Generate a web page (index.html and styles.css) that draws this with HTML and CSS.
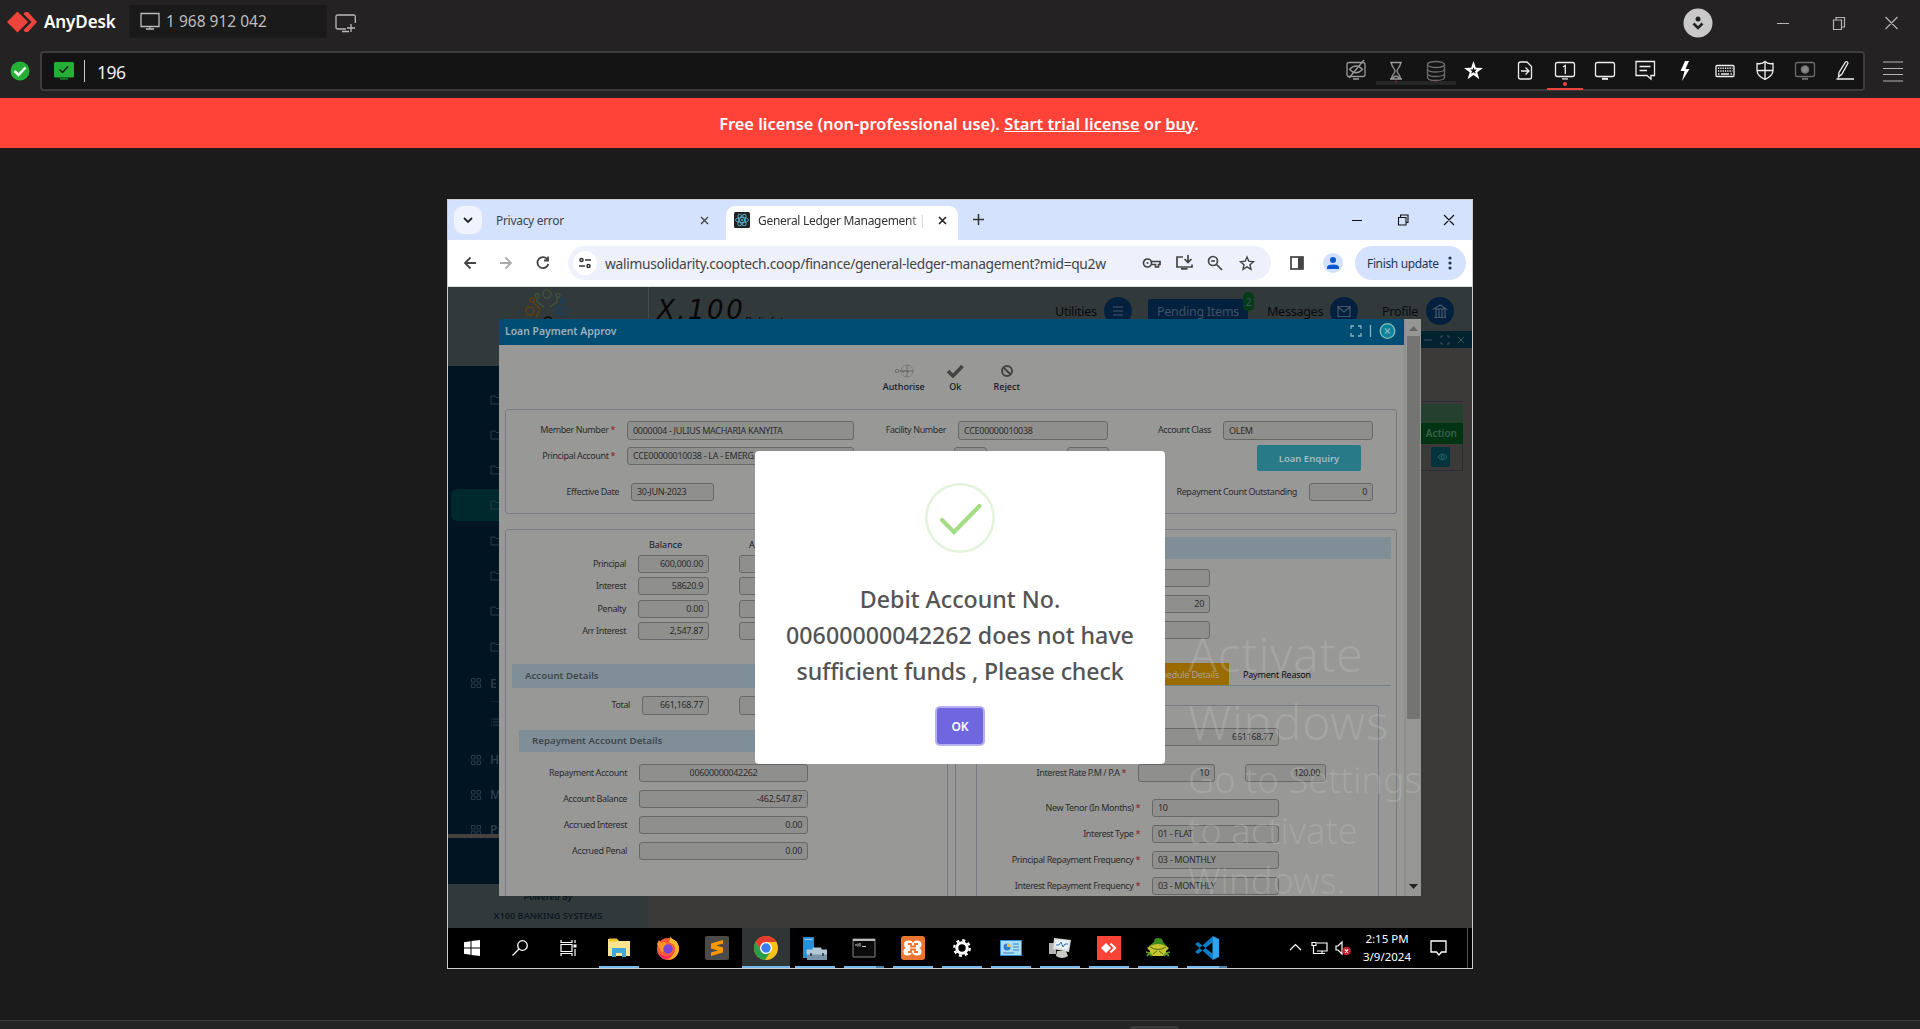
FILE: index.html
```html
<!DOCTYPE html>
<html lang="en">
<head>
<meta charset="utf-8">
<title>AnyDesk</title>
<link rel="stylesheet" href="styles.css">
</head>
<body>
<header class="titlebar">
  <svg class="logo" width="30" height="22" viewBox="0 0 30 22"><path d="M10.500 0.500 21 11 10.500 21.500 0 11Z" fill="#ef443b"/><path d="M18 1h3l9 10-9 10h-3l-1.500-2 8-8-8-8z" fill="#ef443b"/></svg>
  <b class="brand">AnyDesk</b>
  <div class="session"><svg width="20" height="18" viewBox="0 0 20 18" fill="none" stroke="#bbb"><path d="M1 1.500h18v13H1zM10 15v2M6 17h8" stroke-width="1.300"/></svg><span>1 968 912 042</span></div>
  <svg class="newtab" width="22" height="19" viewBox="0 0 22 19" fill="none" stroke="#bbb" stroke-width="1.300"><path d="M20.300 9V2.500q0-1.500-1.500-1.500H2.500Q1 1 1 2.500v11Q1 15 2.500 15H11M16 10v8M12 14h8M7 17.500h7"/></svg>
  <span class="grow"></span>
  <svg class="avatar" width="30" height="30" viewBox="0 0 30 30"><circle cx="15" cy="15" r="14.500" fill="#c9c9c9"/><circle cx="15" cy="11" r="2.500" fill="#222"/><path d="m10.500 15.500 4.500 4.500 4.500-4.500" fill="none" stroke="#222" stroke-width="2.500"/></svg>
  <svg class="winctl" width="130" height="20" viewBox="0 0 130 20" fill="none" stroke="#b5b5b5" stroke-width="1.200"><path d="M7 10.500h12M63.500 7h8v9.500h-8zM66 7V4.500h8.500V14H72M115.500 4l12 12M127.500 4l-12 12"/></svg>
</header>
<div class="addressrow">
  <svg class="status" width="20" height="20" viewBox="0 0 20 20"><circle cx="10" cy="10" r="9.500" fill="#24b036"/><path d="m4.500 10 4 4 7-7.500" fill="none" stroke="#fff" stroke-width="2.500"/></svg>
  <div class="address">
    <svg class="greenmon" width="20" height="18" viewBox="0 0 20 18"><rect width="20" height="15.500" rx="1.500" fill="#24b036"/><path d="M6 16h8v1.800H6z" fill="#167823"/><path d="m5.500 7.500 3 3 5.500-6" fill="none" stroke="#141414" stroke-width="1.300"/></svg>
    <i class="caret"></i><span class="query">196</span><span class="grow"></span>
    <div class="tools">
      <svg class="dim" viewBox="0 0 40 36"><rect x="11" y="8.500" width="18" height="14" rx="2"/><path d="M17 25h6M13.500 15.500q6.500-7 13 0-6.500 6.500-13 0ZM13 24 28 6"/></svg>
      <svg class="dim busy" viewBox="0 0 40 36"><path d="M14 8.500h12M14 25h12M15.500 9c0 5 3.500 5 3.500 8s-3.500 3-3.500 8M24.500 9c0 5-3.500 5-3.500 8s3.500 3 3.500 8M17 24q3-4 6 0"/><circle cx="20" cy="27.500" r="1" fill="#823" stroke="none"/></svg>
      <svg class="dimmer busy" viewBox="0 0 40 36"><ellipse cx="20" cy="10.500" rx="8.500" ry="3"/><path d="M11.500 10.500v13c0 4 17 4 17 0v-13M11.500 15c0 4 17 4 17 0M11.500 19.500c0 4 17 4 17 0"/><circle cx="20" cy="27.500" r="1" fill="#823" stroke="none"/></svg>
      <svg class="star" viewBox="0 0 40 36"><path fill="#fff" stroke="none" d="m17.500 7 2.300 6.700 7.200.2-5.800 4.300 2.100 7-5.800-4.200-5.900 4.200 2.100-7L8 13.900l7.200-.2z"/><path d="m17.500 13 .8 2.500h2.500L19 17.300l.8 2.500-2.300-1.500-2.300 1.500.8-2.500-1.800-1.800h2.500z" fill="#141414" stroke="none"/></svg>
      <svg viewBox="0 0 40 36"><path d="M15.500 8h6.500l4.500 4.500V23q0 2-2 2h-9q-2 0-2-2V10q0-2 2-2ZM16 17h7.500M20.500 13.500 24 17l-3.500 3.500"/></svg>
      <svg class="active" viewBox="0 0 40 36"><rect x="10.500" y="8.500" width="19" height="14" rx="2"/><path d="M17 24.800h6M18 13l2.300-1.500V20"/><circle cx="20" cy="30" r="2" fill="#ef443b" stroke="none"/></svg>
      <svg viewBox="0 0 40 36"><rect x="10.500" y="8.500" width="19" height="14" rx="2"/><path d="M17 24.800h6" stroke-width="2"/></svg>
      <svg viewBox="0 0 40 36"><path d="M11 7.500h18.500v14H26v3.500l-4-3.500H11zM14.500 12.500h11M14.500 16.500H22"/></svg>
      <svg viewBox="0 0 40 36"><path fill="#fff" stroke="none" d="m20 7-4.500 10h4L17 27l7.500-12h-4L24 7z"/></svg>
      <svg viewBox="0 0 40 36"><rect x="11" y="11.500" width="18" height="11" rx="1"/><path d="M13 14.200h14.500M13 17h14.500" stroke-dasharray="1.300 1" stroke-width="1.500"/><path d="M13 20h1.500M16 20h8M25.500 20H27" stroke-width="1.500"/></svg>
      <svg viewBox="0 0 40 36"><path d="M12 9.500q5 1 8-2 3 3 8 2v7q0 5-8 9-8-4-8-9zM20 8v17M12 16.500h16"/></svg>
      <svg class="dimmer" viewBox="0 0 40 36"><rect x="10.500" y="8.500" width="19" height="14" rx="2"/><path d="M17 24.800h6" stroke-width="2"/><circle cx="20" cy="15.500" r="3.700" fill="#888"/></svg>
      <svg viewBox="0 0 40 36"><path d="m13.500 23 .5-4.500 6.500-10.500q1.500-1 2.500 1L17 20zM11.500 25h17.500"/></svg>
    </div>
  </div>
  <svg class="burger" width="20" height="22" viewBox="0 0 20 22" stroke="#b5b5b5" stroke-width="1.200"><path d="M0 2h20M0 8.500h20M0 14.500h20M0 21h20"/></svg>
</div>
<div class="license"><span class="fit">Free license (non-professional use). <u>Start trial license</u> or <u>buy</u>.</span></div>

<main class="viewer">
 <div class="desktop">
  <div class="tabstrip">
    <span class="tabmenu"><svg width="10" height="8" viewBox="0 0 10 8" fill="none" stroke="#222" stroke-width="1.800"><path d="m1 2 4 4 4-4"/></svg></span>
    <div class="tab"><span>Privacy error</span><svg width="9" height="9" viewBox="0 0 9 9" stroke="#444" stroke-width="1.400"><path d="m1 1 7 7M8 1 1 8"/></svg></div>
    <div class="tab current">
      <svg width="16" height="16" viewBox="0 0 16 16" fill="none" stroke="#55b8d0" stroke-width=".9"><rect width="16" height="16" rx="1.500" fill="#222" stroke="none"/><ellipse cx="8" cy="8" rx="6.500" ry="2.600"/><ellipse cx="8" cy="8" rx="6.500" ry="2.600" transform="rotate(60 8 8)"/><ellipse cx="8" cy="8" rx="6.500" ry="2.600" transform="rotate(120 8 8)"/><circle cx="8" cy="8" r=".8"/></svg>
      <span>General Ledger Management | C</span><svg class="x" width="9" height="9" viewBox="0 0 9 9" stroke="#222" stroke-width="1.600"><path d="m1 1 7 7M8 1 1 8"/></svg></div>
    <svg class="plus" width="11" height="11" viewBox="0 0 11 11" stroke="#333" stroke-width="1.500"><path d="M5.500 0v11M0 5.500h11"/></svg>
    <span class="grow"></span>
    <svg class="cwin" width="104" height="12" viewBox="0 0 104 12" fill="none" stroke="#111" stroke-width="1.100"><path d="M0 6.500h10M46.500 3.500h7.500v7.500h-7.500zM48.500 3V1h7.500v7.500h-1.500M92 1l10 10M102 1 92 11"/></svg>
  </div>
  <div class="toolbar">
    <svg class="nav" width="90" height="16" viewBox="0 0 90 16" fill="none" stroke="#444" stroke-width="1.800"><path d="M13 8H2M7.500 2.500 2 8l5.500 5.500"/><path d="M37 8h11M42.500 2.500 48 8l-5.500 5.500" stroke="#aaa"/><path d="M84.500 4.500a5.500 5.500 0 1 0 .8 4.500M85 1.500v4h-4"/></svg>
    <div class="omnibox">
      <span class="tune"><svg width="12" height="12" viewBox="0 0 12 12" fill="none" stroke="#333" stroke-width="1.600"><circle cx="2.500" cy="3" r="1.500"/><path d="M6 3h6M0 9h6"/><circle cx="9.500" cy="9" r="1.500"/></svg></span>
      <span class="url">walimusolidarity.cooptech.coop/finance/general-ledger-management?mid=qu2w</span>
      <svg class="omniicons" width="114" height="18" viewBox="0 0 114 18" fill="none" stroke="#444" stroke-width="1.700"><circle cx="5.500" cy="9" r="4"/><circle cx="5.500" cy="9" r="1" fill="#444" stroke="none"/><path d="M9.500 7.500H18v3h-1.500v2.500h-3v-2.500h-4"/><path d="M41 3h-6v10h15v-2.500M46 1v7M42.500 5l3.500 3.500L49.500 5M39 14.800h6.500" /><circle cx="71" cy="7" r="4.500"/><path d="M69 7h4M74.500 10.500 80 16" /><path d="m105 3 1.800 4.200 4.700.5-3.500 3 1 4.600-4-2.400-4 2.400 1-4.600-3.500-3 4.700-.5z" stroke-width="1.400"/></svg>
    </div>
    <svg class="panel" width="14" height="14" viewBox="0 0 14 14"><rect x="1" y="1" width="12" height="12" fill="none" stroke="#444" stroke-width="1.700"/><path d="M8 1h5v12H8z" fill="#444"/></svg>
    <svg class="profile" width="20" height="20" viewBox="0 0 20 20"><circle cx="10" cy="10" r="10" fill="#d3e1fd"/><circle cx="10" cy="7" r="3" fill="#0b57d0"/><path d="M4 16v-1.500q0-3 6-3t6 3V16z" fill="#0b57d0"/></svg>
    <span class="update"><span>Finish update</span><svg width="4" height="14" viewBox="0 0 4 14" fill="#1d3557"><circle cx="2" cy="2" r="1.600"/><circle cx="2" cy="7" r="1.600"/><circle cx="2" cy="12" r="1.600"/></svg></span>
  </div>

  <div class="page">
    <div class="apphead">
      <svg class="coop" width="46" height="46" viewBox="0 0 46 46" fill="none" stroke-width="1.600"><g stroke="#3d4f3a"><circle cx="22" cy="6" r="4"/><path d="M12 9v5l7 5M32 9v5l-7 5"/><circle cx="12" cy="7.500" r="2"/><circle cx="33" cy="7.500" r="2"/></g><g stroke="#5d3f12"><circle cx="5" cy="23" r="4"/><circle cx="7" cy="12" r="2.200"/><path d="m8 14 7 7-4 8"/></g><g stroke="#1c3f5c"><circle cx="39" cy="23" r="4"/><circle cx="38" cy="12" r="2.200"/><path d="m37 14-7 7 4 8"/></g><circle cx="23" cy="33" r="4" stroke="#0c0c0c"/></svg>
      <span class="x100"><i>X.100</i><small>Reliafat</small></span>
      <span class="grow"></span>
      <span class="menu">Utilities</span><svg class="round" viewBox="0 0 28 28"><path d="M9 10h10M9 14h10M9 18h10"/></svg>
      <span class="pending">Pending Items<em>2</em></span>
      <span class="menu">Messages</span><svg class="round" viewBox="0 0 28 28"><path d="M8 9.500h12v10H8zM8 10l6 5 6-5"/></svg>
      <span class="menu prof">Profile</span><svg class="round last" viewBox="0 0 28 28"><path d="M8 12h12l-6-4zM8 20.500h12M10 12v8M13 12v8M16 12v8M19 12v8"/></svg>
    </div>
    <div class="below">
      <nav class="side">
        <div class="folders">
          <p><svg viewBox="0 0 14 10"><path d="M1 1h4l1 1.500h7V9H1z"/></svg></p>
          <p><svg viewBox="0 0 14 10"><path d="M1 1h4l1 1.500h7V9H1z"/></svg></p>
          <p><svg viewBox="0 0 14 10"><path d="M1 1h4l1 1.500h7V9H1z"/></svg></p>
          <p class="on"><svg viewBox="0 0 14 10"><path d="M1 1h4l1 1.500h7V9H1z"/></svg></p>
          <p><svg viewBox="0 0 14 10"><path d="M1 1h4l1 1.500h7V9H1z"/></svg></p>
          <p><svg viewBox="0 0 14 10"><path d="M1 1h4l1 1.500h7V9H1z"/></svg></p>
          <p><svg viewBox="0 0 14 10"><path d="M1 1h4l1 1.500h7V9H1z"/></svg></p>
          <p><svg viewBox="0 0 14 10"><path d="M1 1h4l1 1.500h7V9H1z"/></svg></p>
        </div>
        <div class="modules">
          <p class="first"><svg viewBox="0 0 10 10"><path d="M.5.500h3.500v3.500H.5zM6 .5h3.500v3.500H6zM.5 6h3.500v3.500H.5zM6 6h3.500v3.500H6z"/></svg>E</p>
          <p class="list"><svg viewBox="0 0 10 8"><path d="M0 1h1M2 1h8M0 4h1M2 4h8M0 7h1M2 7h8"/></svg></p>
          <p><svg viewBox="0 0 10 10"><path d="M.5.500h3.500v3.500H.5zM6 .5h3.500v3.500H6zM.5 6h3.500v3.500H.5zM6 6h3.500v3.500H6z"/></svg>Hu</p>
          <p><svg viewBox="0 0 10 10"><path d="M.5.500h3.500v3.500H.5zM6 .5h3.500v3.500H6zM.5 6h3.500v3.500H.5zM6 6h3.500v3.500H6z"/></svg>M</p>
          <p><svg viewBox="0 0 10 10"><path d="M.5.500h3.500v3.500H.5zM6 .5h3.500v3.500H6zM.5 6h3.500v3.500H.5zM6 6h3.500v3.500H6z"/></svg>Pr</p>
        </div>
        <div class="sidefoot"></div>
        <div class="powered"><i>Powered By</i><span>X100 BANKING SYSTEMS</span></div>
      </nav>
      <aside class="backwin">
        <div class="backbar"><svg width="44" height="10" viewBox="0 0 44 10" fill="none" stroke="#3d4f58"><path d="M1 5h8M18 3V1h2M24 1h2v2M26 7v2h-2M20 9h-2V7M35 2l6 6M41 2l-6 6"/></svg></div>
        <div class="backtable"><div class="th"></div><div class="act">Action</div><div class="eye"><svg width="19" height="20" viewBox="0 0 19 20" fill="none" stroke="#22636b"><path d="M7 10q5-6 9 0-4 6-9 0Z"/><circle cx="11.500" cy="10" r="1.500"/></svg></div></div>
      </aside>
    </div>

    <section class="modal">
      <div class="modalmain">
        <div class="modalhead"><b>Loan Payment Approv</b><span class="grow"></span>
          <svg width="46" height="18" viewBox="0 0 46 18" fill="none" stroke="#8fb0bd" stroke-width="1.300"><path d="M1 7V4h3M8 4h3v3M11 11v3H8M4 14H1v-3M20.500 3v12"/><circle cx="37.500" cy="9" r="7.300" fill="#0a8299" stroke="#8fbcb8"/><path d="m35 6.500 5 5M40 6.500l-5 5"/></svg></div>
        <div class="actions">
          <div><svg width="20" height="14" viewBox="0 0 20 14" fill="none" stroke="#666" stroke-width=".9"><circle cx="3" cy="7" r="1.700"/><path d="M5 7h9v2M9 7v2M8 7h11M13 1v12"/><circle cx="13" cy="7" r="6" stroke-dasharray="1.500 .8"/></svg>Authorise</div>
          <div><svg width="20" height="14" viewBox="0 0 20 14" fill="none" stroke="#444" stroke-width="3.500"><path d="m3 7 5 5 9.500-10"/></svg>Ok</div>
          <div><svg width="14" height="14" viewBox="0 0 14 14" fill="none" stroke="#444" stroke-width="2"><circle cx="7" cy="7" r="5"/><path d="m3.500 3.500 7 7"/></svg>Reject</div>
        </div>
        <div class="box top">
          <div class="r1"><label>Member Number <s>*</s></label><p>0000004 - JULIUS MACHARIA KANYITA</p><label>Facility Number</label><p>CCE00000010038</p><label>Account Class</label><p>OLEM</p></div>
          <div class="r2"><label>Principal Account <s>*</s></label><p>CCE00000010038 - LA - EMERG</p><p></p><p></p><button>Loan Enquiry</button></div>
          <div class="r3"><label>Effective Date</label><p>30-JUN-2023</p><label>Repayment Count Outstanding</label><p class="num">0</p></div>
        </div>
        <div class="box lower">
          <div class="left">
            <div class="heads"><span>Balance</span><span>Arrears</span></div>
            <div class="bal"><label>Principal</label><p class="num">600,000.00</p><p></p></div>
            <div class="bal"><label>Interest</label><p class="num">58620.9</p><p></p></div>
            <div class="bal"><label>Penalty</label><p class="num">0.00</p><p></p></div>
            <div class="bal"><label>Arr Interest</label><p class="num">2,547.87</p><p></p></div>
            <h4 class="acct">Account Details</h4>
            <div class="bal total"><label>Total</label><p class="num">661,168.77</p><p></p></div>
            <h4 class="rep">Repayment Account Details</h4>
            <div class="acc"><label>Repayment Account</label><p class="mid">00600000042262</p></div>
            <div class="acc"><label>Account Balance</label><p class="num">-462,547.87</p></div>
            <div class="acc"><label>Accrued Interest</label><p class="num">0.00</p></div>
            <div class="acc"><label>Accrued Penal</label><p class="num">0.00</p></div>
          </div>
          <div class="right">
            <h4></h4>
            <div class="stack"><p></p><p class="num">20</p><p></p></div>
            <div class="subtabs"><span class="sel">Schedule Details</span><span>Payment Reason</span></div>
            <div class="box inner">
              <p class="num amt">661168.77</p>
              <div class="rate"><label>Interest Rate P.M / P.A <s>*</s></label><p class="num">10</p><p class="num">120.00</p></div>
              <div class="term"><label>New Tenor (In Months) <s>*</s></label><p>10</p></div>
              <div class="term"><label>Interest Type <s>*</s></label><p>01 - FLAT</p></div>
              <div class="term"><label>Principal Repayment Frequency <s>*</s></label><p>03 - MONTHLY</p></div>
              <div class="term"><label>Interest Repayment Frequency <s>*</s></label><p>03 - MONTHLY</p></div>
            </div>
          </div>
        </div>
      </div>
      <div class="scroll"><svg width="9" height="5" viewBox="0 0 9 5"><path d="M4.500 0 9 5H0z" fill="#666"/></svg><i></i><span class="grow"></span><svg width="9" height="5" viewBox="0 0 9 5"><path d="M0 0h9L4.500 5z" fill="#222"/></svg></div>
    </section>

    <div class="watermark"><div><span class="w1">Activate</span><span class="w2">Windows</span></div><div class="small"><span class="w3">Go to Settings</span><span class="w4">to activate</span><span class="w5">Windows.</span></div></div>

    <section class="alert">
      <svg width="70" height="70" viewBox="0 0 70 70" fill="none"><circle cx="35" cy="35" r="33.700" stroke="#e4f4db" stroke-width="2.600"/><path d="m17 37 12 12 25.500-26" stroke="#a5dc86" stroke-width="4.200" stroke-linecap="round"/></svg>
      <h2><span class="l1">Debit Account No.</span><span class="l2">00600000042262 does not have</span><span class="l3">sufficient funds , Please check</span></h2>
      <button>OK</button>
    </section>
  </div>

  <footer class="taskbar">
    <span class="sys"><svg width="16" height="16" viewBox="0 0 16 16" fill="#fff"><path d="M0 2.200 6.500 1.200v6.300H0zM7.500 1 16 0v7.500H7.500zM0 8.500h6.500v6.300L0 13.800zM7.500 8.500H16V16l-8.500-1z"/></svg></span>
    <span class="sys"><svg width="16" height="16" viewBox="0 0 16 16" fill="none" stroke="#fff" stroke-width="1.300"><circle cx="10.500" cy="5.500" r="4.800"/><path d="M7 9 .5 15.500"/></svg></span>
    <span class="sys"><svg width="17" height="16" viewBox="0 0 17 16" fill="none" stroke="#fff" stroke-width="1.200"><path d="M1 0v2.500h11V0M1 16v-2.500h11V16M1 4.500h11v7H1zM15 0v3M15 9v7"/><path d="M13.500 4.500h3v3h-3z" fill="#fff" stroke="none"/></svg></span>
    <span class="app run"><svg width="24" height="24" viewBox="0 0 24 24"><path d="M1 3h9l2 2h11v15H1z" fill="#fde38d"/><path d="M2 2.500h8v3H2z" fill="#f1c232"/><path d="M5 21v-9h14v9h-4v-4H9v4z" fill="#3fa9dc"/></svg></span>
    <span class="app"><svg width="24" height="24" viewBox="0 0 24 24"><circle cx="12" cy="13" r="11" fill="#ff5a36"/><path d="M14 0q1 5-1 6 8 4 10 7-1-6-3-8Q16 4 14 0Z" fill="#ffd23c"/><path d="M14 3q10 3 9 11-2 9-11 10 8-6 7-12-1-5-6-6z" fill="#ffb52b"/><path d="M1 8l2-4 2 3 4-1 3 3-6 8z" fill="#ff9528"/><circle cx="12" cy="13" r="4.700" fill="#7b45d6"/><path d="M2 16q6 7 14 3-4 5-10 3z" fill="#f3226b"/></svg></span>
    <span class="app"><svg width="24" height="24" viewBox="0 0 24 24"><rect width="24" height="24" rx="2" fill="#4b4b4b"/><path d="m18 4-12 3.500v5l7 2-7 2V20l12-3.500v-5l-7-2 7-2z" fill="#ff9800"/></svg></span>
    <span class="app run chrome"><svg width="24" height="24" viewBox="0 0 24 24"><circle cx="12" cy="12" r="12" fill="#fbc116"/><path d="M1.600 6A12 12 0 0 1 22.400 6H12L7 15z" fill="#e33b2e"/><path d="M1.600 6A12 12 0 0 0 11 24l6-9-5 2-5-2z" fill="#2a9d48"/><circle cx="12" cy="12" r="6" fill="#fff"/><circle cx="12" cy="12" r="4.700" fill="#3a7df0"/></svg></span>
    <span class="app run"><svg width="24" height="24" viewBox="0 0 24 24"><path d="M0 1h11v21H0z" fill="#2292dc"/><path d="M1.500 3.500h8" stroke="#9cf"/><path d="M4 14h20v10H4z" fill="#7b95a8"/><path d="M4 14h20v4H4zM10 14v-2h8v2" fill="#b3c7d5" stroke="#b3c7d5"/><path d="M8 17v3M20 17v3" stroke="#234" stroke-width="1.500"/></svg></span>
    <span class="app run two"><svg width="24" height="20" viewBox="0 0 24 20"><path d="M1 1h22v18H1z" fill="#0b0b0b" stroke="#888"/><path d="M1 1h22v2H1z" fill="#bbb"/><path d="M3 7h2M6 5.500v3M8 5v3.500M10 8.500h4" stroke="#ccc"/></svg></span>
    <span class="app run"><svg width="24" height="24" viewBox="0 0 24 24"><rect width="24" height="24" rx="3" fill="#e87630"/><path d="M8 4.500q4 0 4 3.500 0-3.500 4-3.500 4.500 0 4.500 4 0 3-2.500 3.500 2.500.5 2.500 4 0 3.500-4.500 3.500t-5-4q0 4-4.500 4t-4-4q0-3 2.500-3.500-2-1-2-4 0-3.500 5-3.500Z" fill="#fff"/><path d="M7 8h3v2.500h4V8h3M7 16h3v-2.500h4V16h3" fill="none" stroke="#e87630" stroke-width="1.800"/></svg></span>
    <span class="app run"><svg width="18" height="18" viewBox="0 0 18 18" fill="none" stroke="#fff"><circle cx="9" cy="9" r="5.200" stroke-width="3"/><circle cx="9" cy="9" r="7.700" stroke-width="2.400" stroke-dasharray="3 3.050"/></svg></span>
    <span class="app run"><svg width="22" height="16" viewBox="0 0 22 16"><path d="M.5.500h21v15H.5z" fill="#a9defa" stroke="#2f8fcf"/><circle cx="7" cy="7" r="3.500" fill="#2e7fc8"/><path d="M7 7V3.500A3.500 3.500 0 0 1 10.500 7z" fill="#f5c242"/><path d="M13 4h6M13 7h6M13 10h6M3 13h11" stroke="#3a86bf"/></svg></span>
    <span class="app run"><svg width="24" height="22" viewBox="0 0 24 22"><path d="M1 6h7v11H1z" fill="#b5b5b5"/><path d="m6 1 17 2-2 12-16-3z" fill="#ddd"/><path d="m8 3 13 1.500-1.500 8L7 10z" fill="#e9f3fa"/><path d="m8 8 3 0 2-3 2 5 2-3h3" fill="none" stroke="#2c6da3"/><path d="M9 14h9l2 5q-6 4-12 0z" fill="#c9c9c5"/></svg></span>
    <span class="app run"><svg width="24" height="24" viewBox="0 0 24 24"><path d="M0 0h24v24H0z" fill="#fb4438"/><path d="m9 7 5 5-5 5-5-5z" fill="#fff"/><path d="m13.500 7.500 4.500 4.500-4.500 4.500" fill="none" stroke="#fff" stroke-width="2"/></svg></span>
    <span class="app run"><svg width="24" height="20" viewBox="0 0 24 20"><path d="M8 4q0-4 4-4 5 0 5 4l4 4-3 3H6L3 8z" fill="#3f8a1d"/><path d="M4 8q8-4 16 0l3 2-3 3q1 4-3 5H7q-4-1-3-5L1 10z" fill="#c9c531"/><path d="M4 9q8 5 16 0M7 16l4-3M17 16l-4-3" stroke="#4f6d0d" fill="none"/><path d="M1 18q3-4 5 0M23 18q-3-4-5 0M0 14l4 1M24 14l-4 1" stroke="#5a9a1d" stroke-width="1.800" fill="none"/></svg></span>
    <span class="app run two"><svg width="24" height="24" viewBox="0 0 24 24"><path d="M17.500 0 24 3v18l-6.500 3z" fill="#2ba5ee"/><path d="m0 8 3-2 15 12v6zM0 16l3 2 15-12V0z" fill="#0a7bc6"/></svg></span>
    <span class="grow"></span>
    <svg class="tray" width="62" height="16" viewBox="0 0 62 16" fill="none" stroke="#fff" stroke-width="1.200"><path d="m1 10 5.500-5.500L12 10M28 3h10v8H28M24.500 6v7.500H36M23 2.500h4v3h-4zM33 11v3M47 6h2l4-4v12l-4-4h-2z"/><circle cx="57.500" cy="11" r="4.300" fill="#c9202c" stroke="none"/><path d="m56 9.500 3 3M59 9.500l-3 3"/></svg>
    <div class="clock"><span>2:15 PM</span><span>3/9/2024</span></div>
    <svg class="note" width="18" height="17" viewBox="0 0 18 17" fill="none" stroke="#fff" stroke-width="1.300"><path d="M1 1h15v11H11.500l-2.500 3-2.500-3H1z"/></svg>
    <i class="peek"></i>
  </footer>
 </div>
</main>
<div class="hostbar"><i></i></div>
</body>
</html>
```
FILE: styles.css
```css
*{box-sizing:border-box}
body{margin:0;width:1920px;height:1029px;overflow:hidden;display:flex;flex-direction:column;background:#1b1b1b;font-family:"Noto Sans","Open Sans",sans-serif;font-size:14px;color:#eee}
p,h2,h4{margin:0;font-weight:inherit}
svg{display:block;flex:none}
.grow{flex:1}
span,b,label,p{white-space:nowrap}

/* host window */
.titlebar{height:46px;background:#242223;display:flex;align-items:flex-start;flex:none}
.logo{margin:11px 0 0 7px}
.brand{margin:10px 0 0 7px;width:78px;font-size:17px;line-height:24px;font-weight:600;color:#fff;letter-spacing:-.1px}
.session{margin:5px 0 0 7px;width:198px;height:33px;border-radius:3px;background:#1a1a1a;display:flex;align-items:center;padding:0 11px;gap:6px;color:#bdbdbd;font-size:15.500px}
.session span{margin-top:-2px}
.session svg{margin-top:-2px}
.newtab{margin:14px 0 0 8px}
.avatar{margin:8px 57px 0 0}
.winctl{margin:13px 20px 0 0}
.addressrow{height:52px;background:#242223;display:flex;flex:none;padding-top:5px}
.status{margin:10px 10px 0}
.address{width:1825px;height:40px;border:2px solid #3d3c3d;border-radius:4px;background:#141414;display:flex;align-items:center}
.greenmon{margin-left:12px}
.caret{width:1px;height:22px;background:#ccc;margin:0 12px 0 10px}
.query{font-size:17.500px;color:#eee;letter-spacing:-.5px;margin-top:1px}
.tools{display:flex;height:36px;margin-right:-2px}
.tools svg{width:40px;height:36px;fill:none;stroke:#eee;stroke-width:1.300;position:relative;top:1px}
.tools .dim{stroke:#999}
.tools .dimmer{stroke:#6c6c6c}
.tools .busy{background:linear-gradient(#262626,#262626) 0 27px/40px 4px no-repeat}
.tools .star{margin-right:9px}
.tools .active{background:linear-gradient(#ef443b,#ef443b) 2px 34px/36px 2px no-repeat}
.burger{margin:9px 0 0 18px}
.license{height:50px;background:#ff4339;display:flex;align-items:center;justify-content:center;flex:none;color:#fff;font-weight:600;font-size:16.400px;padding-right:2px}
.hostbar{height:9px;border-top:1px solid #3c3c3c;background:#252424;display:flex;align-items:flex-end}
.hostbar i{width:49px;height:3px;border-radius:4px 4px 0 0;background:#3b3a3a;margin-left:1130px}
.viewer{flex:1;padding:51px 0 0 447px;min-height:0}
.desktop{width:1026px;height:770px;border:1px solid #ccc;background:#000;display:flex;flex-direction:column}

/* browser chrome */
.tabstrip{height:40px;background:#d5e2fd;display:flex;padding:6px 16px 0 6px;flex:none;color:#41454a;font-size:12px;letter-spacing:-.3px}
.tabmenu{width:28px;height:28px;border-radius:9px;background:#eef3fe;display:grid;place-items:center}
.tab{width:244px;height:28px;padding:0 17px 0 14px;display:flex;align-items:center;justify-content:space-between}
.tab.current{width:232px;height:34px;padding:0 10px 6px 8px;justify-content:flex-start;gap:8px;border-radius:9px 9px 0 0;background:#fff;color:#333}
.tab.current span{width:168px;overflow:hidden;-webkit-mask:linear-gradient(90deg,#000 90%,transparent)}
.x{margin-left:4px}
.plus{margin:8px 0 0 15px}
.cwin{margin-top:8px}
.toolbar{height:47px;background:#fff;border-bottom:1px solid #ddd;display:flex;align-items:center;flex:none}
.nav{margin-left:15px}
.omnibox{width:703px;height:34px;margin-left:15px;border-radius:17px;background:#eef1fb;display:flex;align-items:center;padding:0 15px 0 5px}
.tune{width:24px;height:24px;border-radius:50%;background:#fff;display:grid;place-items:center;margin-right:8px}
.url{flex:1;font-size:13.800px;letter-spacing:-.33px;color:#444}
.panel{margin-left:19px}
.profile{margin-left:19px}
.update{margin-left:12px;width:111px;height:34px;border-radius:17px;background:#d5e2fd;color:#1d3557;font-size:12px;letter-spacing:-.35px;display:flex;align-items:center;justify-content:space-between;padding:0 14px 0 12px}

/* application page, dimmed by the dialog backdrop */
.page{height:641px;background:#3b3a39;position:relative;overflow:hidden;flex:none}
.apphead{height:46px;background:#32393b;display:flex;padding-right:18px}
.coop{margin:1px 0 0 77px}
.x100{margin-left:77px;border-left:1px solid #444b4d;padding-left:8px;color:#070707;width:170px;height:46px;display:flex;align-items:flex-start}
.x100 i{font:italic 200 26px/30px "DejaVu Sans",sans-serif;letter-spacing:2.500px;margin-top:8px}
.x100 small{font-size:11px;line-height:14px;margin-top:27px}
.menu{font-size:12.600px;letter-spacing:-.3px;line-height:50px;color:#070b0c;width:41px}
.round{width:28px;height:28px;border-radius:50%;background:#03213f;margin:10px 0 0 8px;fill:none;stroke:#46586a;stroke-width:1.200}
.pending{position:relative;width:100px;height:40px;margin:12px 19px 0 16px;border-radius:3px;background:#03213f;color:#3f5164;font-size:12.400px;letter-spacing:-.2px;line-height:26px;text-align:center}
.pending+.menu{width:55px}
.menu.prof{width:36px;margin-left:24px}
.pending em{position:absolute;left:95px;top:-7px;width:11px;height:19px;border-radius:5px;background:#043b18;font-style:normal;font-size:11px;line-height:19px}
.below{display:flex;justify-content:space-between;height:595px}
.side{width:200px;display:flex;flex-direction:column;background:#32393b}
.folders{background:#001422;margin-top:33px;padding-top:16px}
.folders p{height:35.300px;padding:0 0 0 42px;display:flex;align-items:center}
.folders svg{width:14px;height:10px}
.side svg{fill:none;stroke:#2a3a44;flex:none}
.folders .on{background:#00292d;margin-left:3px;padding-left:39px;height:32px;margin-top:1.500px;margin-bottom:1.800px;border-radius:6px}
.modules{background:#001422;height:169.600px;overflow:hidden;display:flex;flex-direction:column;color:#2f3c45;font-size:12px;font-weight:600}
.modules p{height:35px;padding-left:23px;display:flex;align-items:center;gap:9px;flex:none}
.modules p svg{width:10px;height:10px}
.modules .first{height:36px;margin-top:1px}
.modules .list{height:41px;margin-left:42px;padding-left:1px;border-top:1px solid #10222e}
.side .sidefoot{height:50px;border-top:4px solid #43403e;background:#001422;flex:none}
.powered{flex:1;padding-top:4px;display:flex;flex-direction:column;align-items:center;color:#0c1822;font-size:9.200px;font-weight:600;line-height:18px}
.powered span{margin-top:1px}
.backwin{width:54px;margin-top:-2px;display:flex;flex-direction:column}
.backbar{height:17px;background:#02222f;display:flex;align-items:center;padding-left:5px}
.backtable{margin:53px 9px 0 0;border-top:1px solid #2e2e3a;padding-top:2px;font-size:10px;font-weight:600;color:#3d5f48;text-align:right}
.th{height:19px;background:#24402f}
.act{height:21px;background:#013413;line-height:21px;padding-right:6px}
.eye{height:27px;border:1px solid #2d2d38;border-width:0 1px 1px 0;padding:3px 12px 0 0;display:flex;justify-content:flex-end}
.eye svg{background:#04343b;border-radius:2px}

.modal{position:absolute;left:51px;top:32px;width:922px;height:577px;background:#989896;display:flex;overflow:hidden;color:#2c2c2e;font-size:9px}
.modalmain{width:905px;display:flex;flex-direction:column}
.modalmain>*{flex:none}
.modalhead{height:26px;background:#004d74;display:flex;align-items:center;padding:0 6px 3px;color:#9fb0b8;font-size:10.400px}
.modalhead b{font-weight:600}
.modalhead svg{margin-right:2px}
.actions{height:64px;padding:19px 0 0 379px;display:flex;font-size:9px;font-weight:500;line-height:16px;color:#161628}
.actions div{width:51.500px;display:flex;flex-direction:column;align-items:center;gap:1px}
.box{border:1px solid #777a84;border-radius:3px;flex:none}
.top{width:892px;height:105px;margin:0 0 15px 6px;padding-top:11px}
.modal label{text-align:right;line-height:18px;margin-right:12px;letter-spacing:-.4px}
.modal s{text-decoration:none;color:#8c1620}
.modal p{height:18px;border:1px solid #686868;border-radius:3px;background:#8f8f8d;padding:0 5px;line-height:16px;overflow:hidden;letter-spacing:-.3px}
.modal p.num{text-align:right}
.modal p.mid{text-align:center}
.r1,.r2,.r3{display:flex}
.r1 p{width:150px;height:19px;line-height:17px}
.r1 label:nth-of-type(1),.r2 label{width:109px}
.r1 p:nth-of-type(1),.r2 p:nth-of-type(1){width:227px}
.r1 label:nth-of-type(2){width:92px}
.r1 label:nth-of-type(3){width:103px}
.r2{margin-top:7px;height:36px}
.r2 p:nth-of-type(2){width:33px;margin-left:100px}
.r2 p:nth-of-type(3){width:42px;margin-left:80px}
.r2 button{margin:-2px 0 0 148px;width:104px;height:26px;padding:0;border:0;border-radius:2px;background:#297a89;color:#a5bcbf;font:600 9.500px "Noto Sans",sans-serif}
.r3 label:nth-of-type(1){width:113px}
.r3 p:nth-of-type(1){width:83px}
.r3 label:nth-of-type(2){width:583px;margin-right:12px}
.r3 p:nth-of-type(2){width:64px}
.lower{width:892px;height:400px;margin-left:6px;display:flex}
.left{width:442px;border-right:1px solid #777a84}
.heads{display:flex;height:25px;padding:6px 0 0 132px;line-height:18px;color:#161628}
.heads span{width:55px;text-align:center}
.heads span:first-child{margin-right:44px}
.bal{display:flex;margin-bottom:4.400px}
.bal label{width:120px}
.bal p{width:71px;margin-right:30px}
h4{background:#7f8e97;color:#3f474d;font-size:9.700px;font-weight:600}
.acct{height:24px;margin:24px 0 8px 6px;padding-left:13px;line-height:24px}
.total{margin:0}
.total label{width:124px}
.total p{width:67px;height:19px}
.total p:last-child{width:71px}
.rep{height:22px;margin:15px 0 12px 13px;padding-left:13px;line-height:22px}
.acc{display:flex;margin-bottom:8px}
.acc label{width:121px}
.acc p{width:169px}
.right{width:436px;margin-left:7px;border-left:1px solid #777a84;padding-top:7px}
.right h4{height:22px;margin-bottom:10px}
.stack p{width:122px;margin:0 0 8px 132px}
.subtabs{margin-top:24px;height:23px;border-bottom:1px solid #747f88;display:flex;padding-left:180px;line-height:23px;gap:14px;color:#0c0c10;letter-spacing:-.2px}
.subtabs span{width:70px}
.subtabs .sel{width:80px;background:#996b00;text-align:right;padding-right:10px;margin-left:13px;color:#a5a29a}
.inner{width:403px;height:240px;margin:19px 0 0 20px;padding-top:22px}
.amt{width:200px;margin-left:102px}
.rate,.term{display:flex}
.rate{margin:18px 0 17px}
.rate label{width:149px}
.rate p:nth-of-type(1){width:77px}
.rate p:nth-of-type(2){width:81px;margin-left:30px}
.term{margin-bottom:8px}
.term label{width:163px}
.term p{width:127px}
.scroll{width:17px;background:#969694;display:flex;flex-direction:column;align-items:center;padding:7px 0;border-left:2px solid #8f8f8d}
.scroll i{width:13px;height:383px;background:#747472;margin-top:5px}

.watermark{position:absolute;left:740px;top:333px;width:236px;height:276px;overflow:hidden;color:rgba(190,190,190,.34);font-size:48px;letter-spacing:.6px;line-height:67.500px;font-weight:300}
.watermark span{display:block}
.small{font-size:36px;letter-spacing:.15px;line-height:50.500px}

.alert{position:absolute;left:307px;top:164px;width:410px;height:313px;border-radius:4px;background:#fff;display:flex;flex-direction:column;align-items:center;padding-top:32px}
.alert h2{margin:28px 0 0;font-size:23.200px;line-height:36px;font-weight:500;color:#545454;display:flex;flex-direction:column;align-items:center}
.alert .l3{letter-spacing:-.15px}
.alert button{margin-top:19px;width:46px;height:36px;padding:0;border:0;border-radius:3px;background:#7066e0;box-shadow:0 0 0 2px #b7b2ef;color:#fff;font:600 12px "Noto Sans",sans-serif}

/* remote taskbar */
.taskbar{height:40px;background:#000;display:flex;align-items:center}
.sys{width:48px;display:grid;place-items:center}
.app{width:40px;height:40px;margin-right:9px;display:grid;place-items:center}
.sys+.app{margin-left:7px}
.run{border-bottom:2px solid #76b9ed;padding-top:2px}
.chrome{width:48px;margin:0 5px 0 -4px;background:#2f3435}
.two{border-image:linear-gradient(90deg,#76b9ed 78%,#4d7fa8 78%) 2}
.two{border-width:0 0 2px}
.tray{margin-right:6px}
.clock{width:60px;display:flex;flex-direction:column;align-items:center;font-size:11.500px;line-height:18px;color:#fff}
.note{margin:0 19px 0 13px}
.peek{width:1px;height:40px;background:#555;margin-right:4px}
```
